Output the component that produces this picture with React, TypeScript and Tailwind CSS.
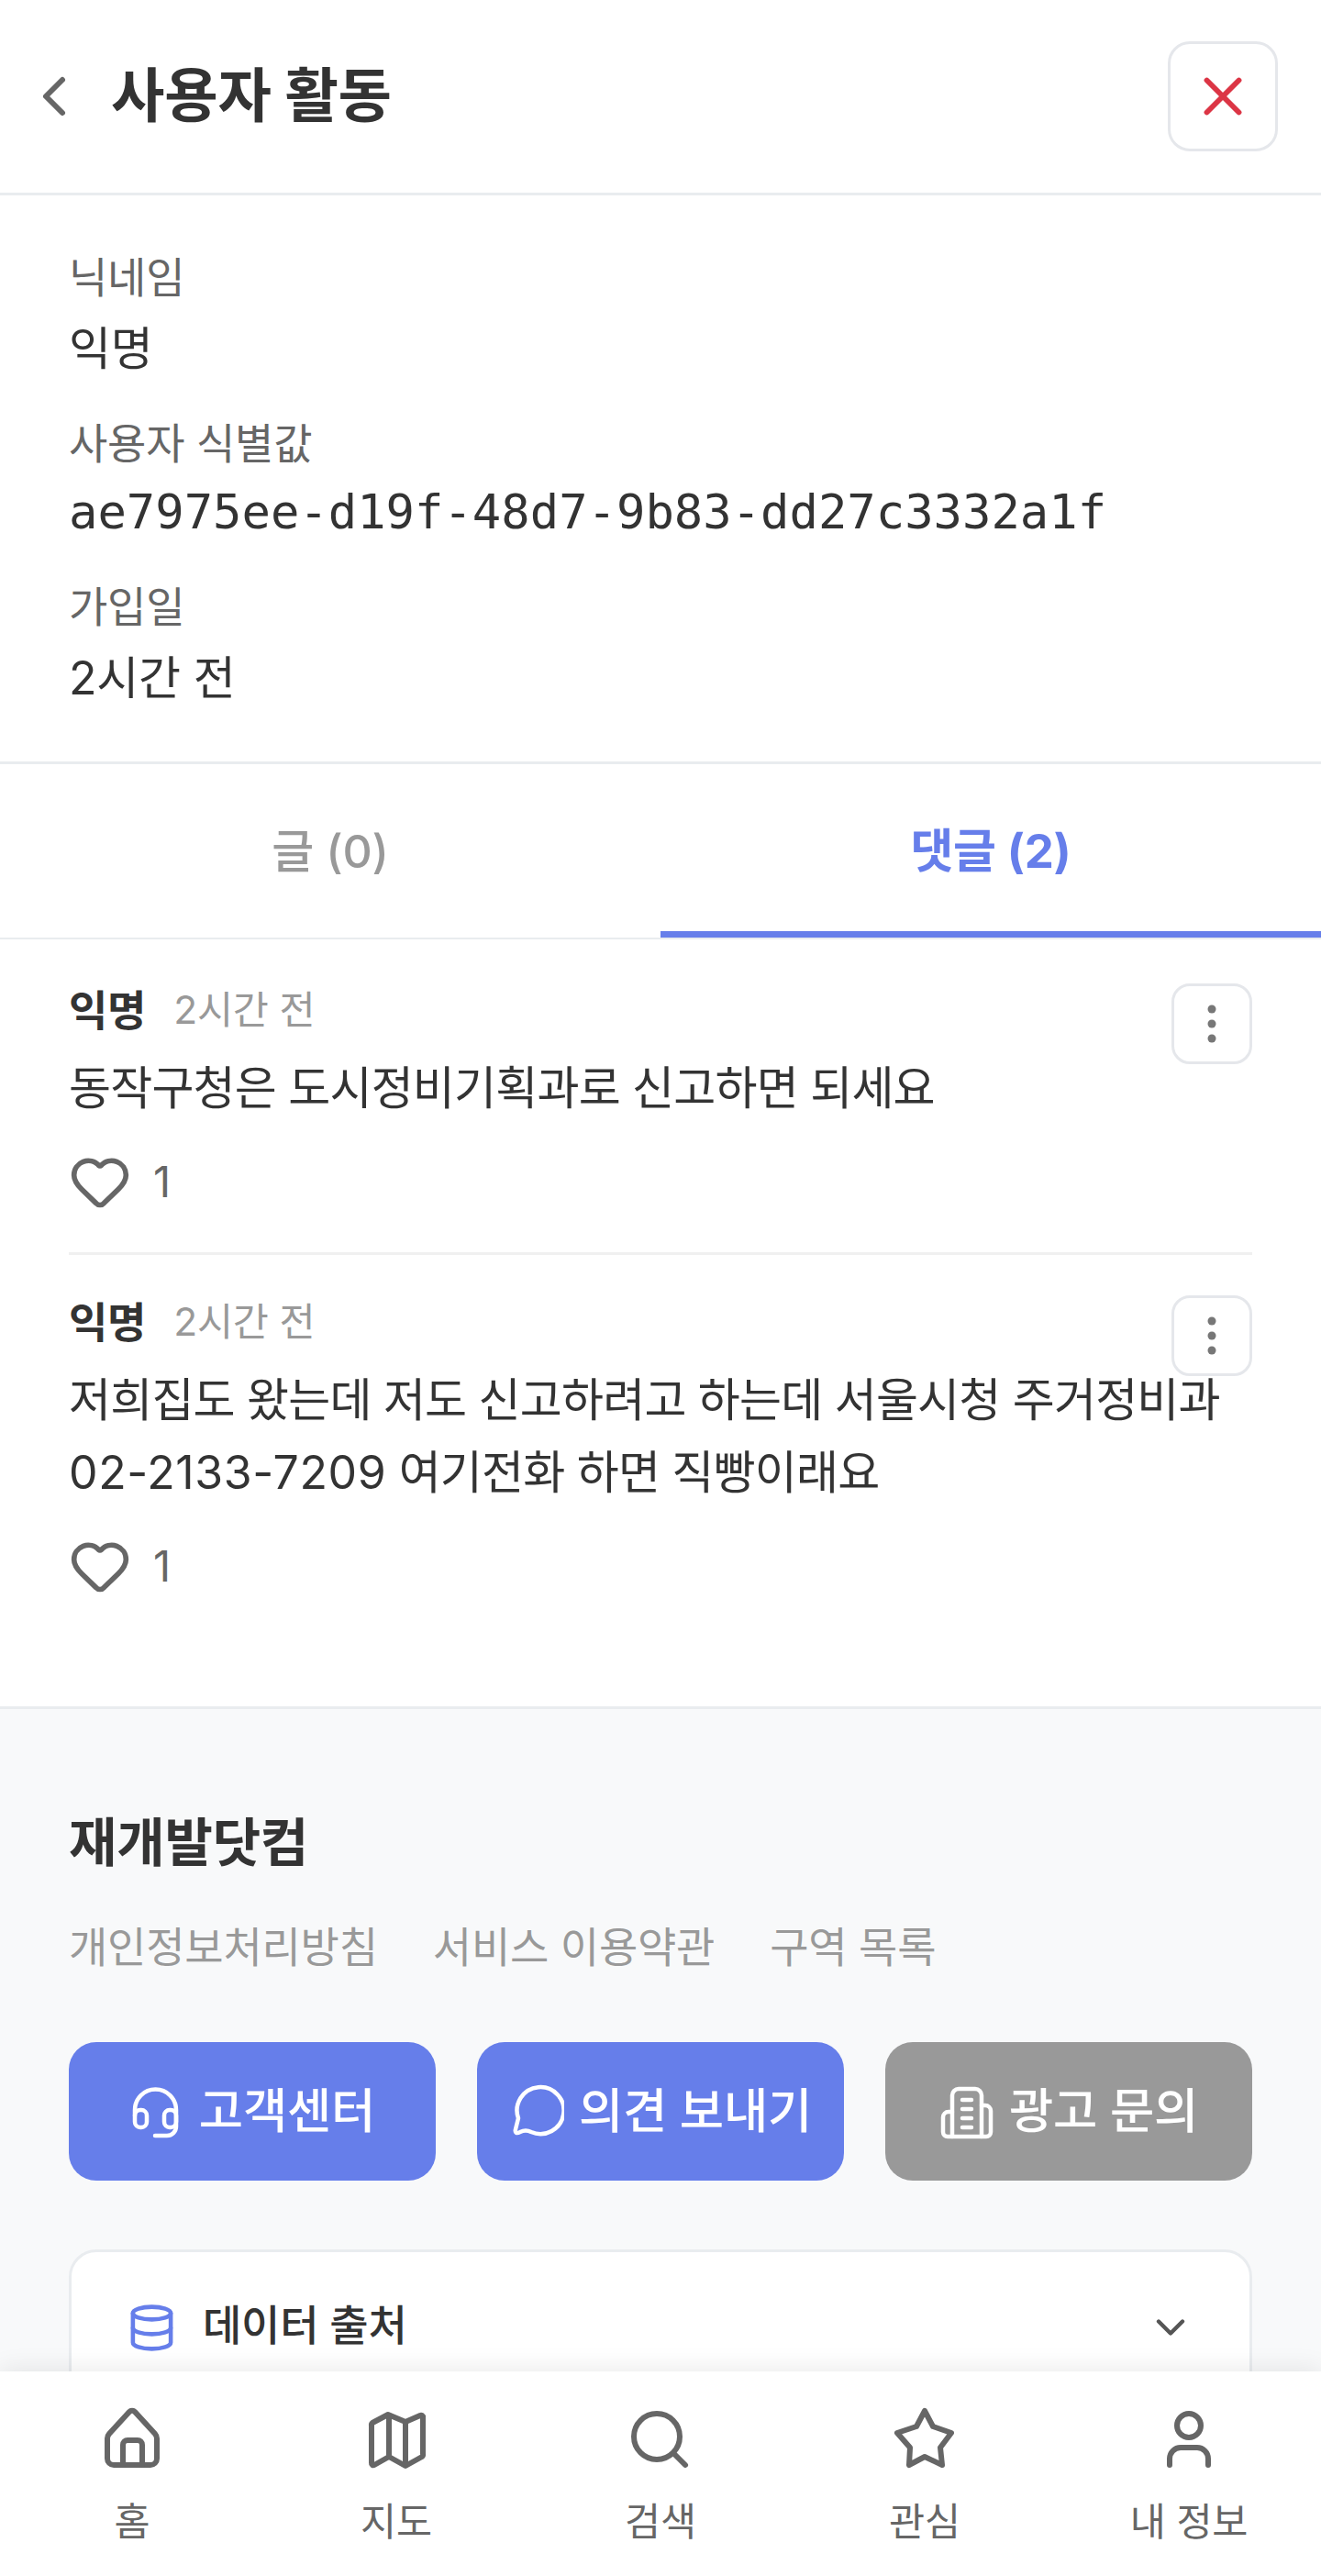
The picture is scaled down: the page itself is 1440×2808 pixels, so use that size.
import { ChevronLeft, ChevronDown, X, Heart, Database } from "lucide-react";

function Kebab() {
  return (
    <button className="w-[88px] h-[88px] shrink-0 rounded-[20px] border-[3px] border-[#e5e7eb] bg-white/90 flex items-center justify-center">
      <svg width="10" height="42" viewBox="0 0 10 42" fill="#777777">
        <circle cx="5" cy="5" r="4.5" />
        <circle cx="5" cy="21" r="4.5" />
        <circle cx="5" cy="37" r="4.5" />
      </svg>
    </button>
  );
}

function InfoRow({ label, value, mono }: { label: string; value: string; mono?: boolean }) {
  return (
    <div className="mb-[28px] last:mb-0">
      <div className="text-[46px] leading-[70px] pb-[3px] text-[#666666]">{label}</div>
      <div
        className={
          mono
            ? "font-['DejaVu_Sans_Mono',monospace] tracking-normal text-[52.2px] leading-[74px] pb-[3px] text-[#333333]"
            : "text-[50px] leading-[80px] text-[#333333]"
        }
      >
        {value}
      </div>
    </div>
  );
}

function Comment({ children, last }: { children: React.ReactNode; last?: boolean }) {
  return (
    <div className={last ? "pt-[46px] pb-[43px]" : "pt-[45px] pb-[43px] border-b-[3px] border-[#f0f0f0]"}>
      <div className="flex items-start justify-between h-[60px]">
        <div className="flex items-center gap-[30px] h-[54px]">
          <span className="text-[46px] leading-[54px] font-bold text-[#333333]">익명</span>
          <span className="text-[42.5px] leading-[54px] text-[#999999]">2시간 전</span>
        </div>
        <div className="relative z-10 -mt-[2px]">
          <Kebab />
        </div>
      </div>
      <div className="mt-[13px] text-[50px] leading-[79px] tracking-[-0.016em] text-[#333333]">{children}</div>
      <div className="mt-[28px] h-[68px] flex items-center gap-[24px] text-[47px] text-[#666666]">
        <Heart size={68} strokeWidth={2} color="#666666" />
        <span>1</span>
      </div>
    </div>
  );
}

function HeadsetIcon() {
  return (
    <svg width="60" height="60" viewBox="0 0 60 60" fill="none" stroke="#ffffff" strokeWidth="4.5" strokeLinecap="round" strokeLinejoin="round">
      <path d="M6 34V28a22.5 22.5 0 0 1 45 0V46a10 10 0 0 1-10 10H28" />
      <rect x="6" y="28" width="13" height="19" rx="6" />
      <rect x="38" y="28" width="13" height="19" rx="6" />
    </svg>
  );
}

function BubbleIcon() {
  return (
    <svg width="60" height="60" viewBox="0 0 60 60" fill="none" stroke="#ffffff" strokeWidth="4.5" strokeLinecap="round" strokeLinejoin="round">
      <path d="M10 37A25.5 25.5 0 1 1 24 52C20 50 16 50 12 52C8 54 6 53 7 49L10 37Z" />
    </svg>
  );
}

function BuildingIcon() {
  return (
    <svg width="60" height="60" viewBox="0 0 60 60" fill="none" stroke="#ffffff" strokeWidth="4.5" strokeLinecap="round" strokeLinejoin="round">
      <path d="M14 57V12a7 7 0 0 1 7-7h18a7 7 0 0 1 7 7v45" />
      <path d="M14 30H10a6 6 0 0 0-6 6v16a5 5 0 0 0 5 5h42a5 5 0 0 0 5-5V29a6 6 0 0 0-6-6h-4" />
      <path d="M25 17h10M25 27h10M25 37h10M25 47h10" />
    </svg>
  );
}

function HomeIcon() {
  return (
    <svg width="72" height="72" viewBox="0 0 72 72" fill="none" stroke="#666666" strokeWidth="6" strokeLinecap="round" strokeLinejoin="round">
      <path d="M33 7a4 4 0 0 1 6 0L61 31a8 8 0 0 1 2 5V58a7 7 0 0 1-7 7H16a7 7 0 0 1-7-7V36a8 8 0 0 1 2-5Z" />
      <path d="M26 65V43a5 5 0 0 1 5-5H42a5 5 0 0 1 5 5V65" />
    </svg>
  );
}

function MapIcon() {
  return (
    <svg width="72" height="72" viewBox="0 0 72 72" fill="none" stroke="#666666" strokeWidth="6" strokeLinecap="round" strokeLinejoin="round">
      <path d="M9 22a3 3 0 0 1 1-3L27 10 46 18 62 11a2 2 0 0 1 3 2V53a3 3 0 0 1-1 3L46 66 28 56 12 65a2 2 0 0 1-3-2Z" />
      <path d="M28 11V56M46 18V65" />
    </svg>
  );
}

function SearchIcon() {
  return (
    <svg width="72" height="72" viewBox="0 0 72 72" fill="none" stroke="#666666" strokeWidth="6" strokeLinecap="round" strokeLinejoin="round">
      <circle cx="32" cy="34" r="25" />
      <path d="M50 52 63 65" />
    </svg>
  );
}

function StarIcon() {
  return (
    <svg width="72" height="72" viewBox="0 0 72 72" fill="none" stroke="#666666" strokeWidth="6" strokeLinecap="round" strokeLinejoin="round">
      <path d="M36 6 45 23 65 30 53 46 55 65 36 56 19 65 20 46 6 30 27 23Z" />
    </svg>
  );
}

function UserIcon() {
  return (
    <svg width="72" height="72" viewBox="0 0 72 72" fill="none" stroke="#666666" strokeWidth="6" strokeLinecap="round" strokeLinejoin="round">
      <circle cx="36" cy="22" r="13" />
      <path d="M15 65V58a12 12 0 0 1 12-12H45a12 12 0 0 1 12 12V65" />
    </svg>
  );
}

const tabs = [
  { label: "홈", icon: <HomeIcon /> },
  { label: "지도", icon: <MapIcon /> },
  { label: "검색", icon: <SearchIcon /> },
  { label: "관심", icon: <StarIcon /> },
  { label: "내 정보", icon: <UserIcon /> },
];

export default function App() {
  return (
    <div className="relative h-[2808px] w-[1440px] overflow-hidden bg-white tracking-[-0.014em] font-['Inter','Noto_Sans_CJK_KR',sans-serif]">
      <header className="h-[213px] border-b-[3px] border-[#e9ecef] flex items-center justify-between pl-[23px] pr-[47px]">
        <div className="flex items-center gap-[26px]">
          <ChevronLeft size={72} strokeWidth={2} color="#666666" />
          <h1 className="text-[63.5px] font-bold text-[#333333] leading-none pb-[3px]">사용자 활동</h1>
        </div>
        <button className="w-[120px] h-[120px] rounded-[24px] border-[3px] border-[#e5e7eb] flex items-center justify-center">
          <X size={70} strokeWidth={2} color="#dc3545" />
        </button>
      </header>

      <section className="px-[75px] pt-[54px] pb-[51px] border-b-[3px] border-[#e9ecef]">
        <InfoRow label="닉네임" value="익명" />
        <InfoRow label="사용자 식별값" value="ae7975ee-d19f-48d7-9b83-dd27c3332a1f" mono />
        <InfoRow label="가입일" value="2시간 전" />
      </section>

      <nav className="flex h-[191px] border-b-[2px] border-[#e9ecef]">
        <div className="flex-1 flex items-center justify-center pt-[2px] text-[50px] font-medium text-[#999999]">글 (0)</div>
        <div className="flex-1 flex items-center justify-center pt-[8px] text-[51px] font-bold text-[#667eea] border-b-[7px] border-[#667eea]">댓글 (2)</div>
      </nav>

      <section className="px-[75px] pt-[5px] pb-[76px]">
        <Comment>
          <div className="whitespace-nowrap">동작구청은 도시정비기획과로 신고하면 되세요</div>
        </Comment>
        <Comment last>
          <div className="whitespace-nowrap">저희집도 왔는데 저도 신고하려고 하는데 서울시청 주거정비과</div>
          <div className="whitespace-nowrap">
            <span className="tracking-[0.012em]">02-2133-7209</span> 여기전화 하면 직빵이래요
          </div>
        </Comment>
      </section>

      <footer className="bg-[#f8f9fa] border-t-[3px] border-[#e9ecef] px-[75px] pt-[109px] pb-[200px]">
        <div className="text-[57px] leading-[74px] font-bold text-[#333333]">재개발닷컴</div>
        <div className="mt-[41px] flex gap-[60px] text-[46px] leading-[70px] text-[#999999]">
          <span>개인정보처리방침</span>
          <span>서비스 이용약관</span>
          <span>구역 목록</span>
        </div>
        <div className="mt-[69px] grid grid-cols-3 gap-[45px]">
          <div className="h-[151px] rounded-[30px] bg-[#667eea] flex items-center justify-center gap-[16px] text-white text-[52.5px] font-medium">
            <HeadsetIcon />
            <span>고객센터</span>
          </div>
          <div className="h-[151px] rounded-[30px] bg-[#667eea] flex items-center justify-center gap-[16px] text-white text-[52.5px] font-medium">
            <BubbleIcon />
            <span>의견 보내기</span>
          </div>
          <div className="h-[151px] rounded-[30px] bg-[#999999] flex items-center justify-center gap-[16px] text-white text-[52.5px] font-medium">
            <BuildingIcon />
            <span>광고 문의</span>
          </div>
        </div>
        <div className="mt-[75px] rounded-[30px] border-[3px] border-[#e9ecef] bg-white">
          <div className="h-[164px] flex items-center pl-[60px] pr-[60px]">
            <Database size={55} strokeWidth={2} color="#667eea" />
            <span className="ml-[28px] pb-[6px] text-[46px] font-medium text-[#333333]">데이터 출처</span>
            <ChevronDown size={52} strokeWidth={2} color="#555555" className="ml-auto" />
          </div>
        </div>
      </footer>

      <div className="absolute bottom-0 inset-x-0 h-[223px] bg-white shadow-[0_-4px_24px_rgba(0,0,0,0.08)] grid grid-cols-5">
        {tabs.map((t) => (
          <div key={t.label} className="flex flex-col items-center pt-[37px]">
            {t.icon}
            <span className="mt-[25px] text-[42.5px] leading-[60px] text-[#666666]">{t.label}</span>
          </div>
        ))}
      </div>
    </div>
  );
}
